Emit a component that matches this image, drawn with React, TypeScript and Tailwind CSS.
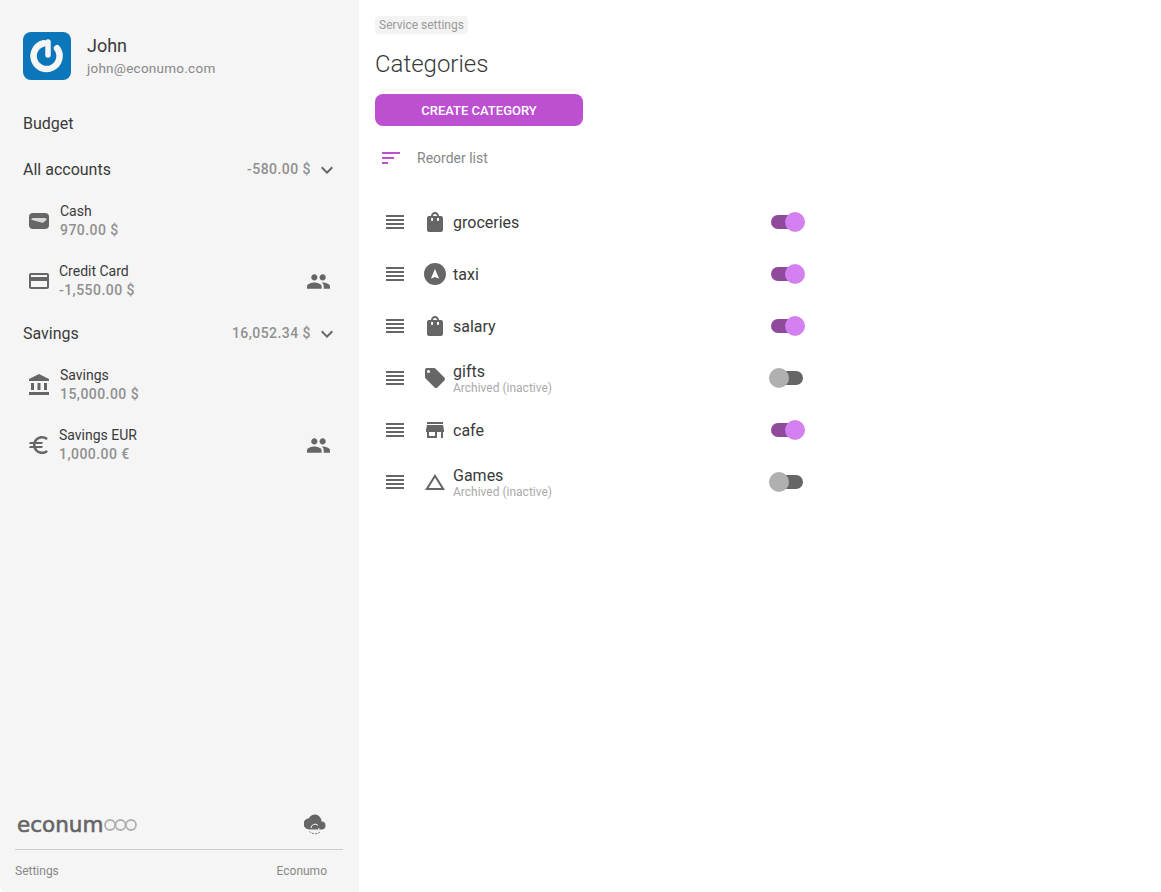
import type { ReactNode } from 'react';
import {
  MdAccountBalance,
  MdChangeHistory,
  MdCreditCard,
  MdEuro,
  MdExpandMore,
  MdLocalOffer,
  MdPeople,
  MdReorder,
  MdShoppingBag,
  MdSort,
  MdStore,
} from 'react-icons/md';

const WalletIcon = ({ size = 24 }: { size?: number }) => (
  <svg width={size} height={size} viewBox="0 0 24 24" fill="none">
    <rect x="2" y="4" width="20" height="16" rx="4" fill="currentColor" />
    <path d="M4.200 10.800C4.600 9.600 5.400 9 6.500 9h11c1.100 0 1.900.6 2.300 1.800l-3.500 2.700c-.3.2-.7.3-1 .2z" fill="#f5f5f5" opacity="0.8" />
  </svg>
);

const NavigationIcon = ({ size = 24 }: { size?: number }) => (
  <svg width={size} height={size} viewBox="0 0 24 24" fill="currentColor">
    <path d="M12 1C5.900 1 1 5.900 1 12s4.900 11 11 11 11-4.900 11-11S18.100 1 12 1zm3.600 15.500L12 15l-3.600 1.500-.35-.35L12 7l3.950 9.150-.35.35z" />
  </svg>
);

const CloudSyncIcon = () => (
  <svg width={22} height={22} viewBox="0 0 22 22" fill="none">
    <path
      fill="#666666"
      d="M17.500 7.500A6.800 6.800 0 0 0 11 .5a6.800 6.800 0 0 0-6 3.700A5.300 5.300 0 0 0 5.500 15.500h12a4 4 0 0 0 0-8z"
    />
    <path d="M7 14a4 4 0 0 1 7-2.500" stroke="#f5f5f5" strokeWidth="1" />
    <path d="M15 14a4 4 0 0 1-1 2.500" stroke="#f5f5f5" strokeWidth="1" />
    <path d="M5.500 17.500a7 6 0 0 0 11 0" stroke="#777777" strokeWidth="1" strokeDasharray="2 1" />
  </svg>
);

const Avatar = () => (
  <div className="flex h-12 w-12 shrink-0 items-center justify-center rounded-lg bg-[#0b76b9]">
    <svg width={48} height={48} viewBox="0 0 48 48" fill="none">
      <g stroke="#f6f6f6" style={{ filter: 'blur(0.7px)' }}>
        <path d="M21 11.300A13 13 0 1 0 34 16.300" strokeWidth="6.500" strokeLinecap="round" />
        <path d="M25 10V23" strokeWidth="5.500" strokeLinecap="round" />
      </g>
    </svg>
  </div>
);

const Logo = () => (
  <div className="flex items-center">
    <span className="font-['DejaVu_Sans'] text-[21.500px] leading-none text-[#666666] [-webkit-text-stroke:0.6px_#666666]">econum</span>
    <svg width={35} height={14} viewBox="0 0 35 14" fill="none" stroke="#b0b0b0" strokeWidth="1.800" className="ml-[1px]">
      <circle cx="6" cy="7" r="5" />
      <circle cx="16.500" cy="7" r="5" />
      <circle cx="27" cy="7" r="5" />
    </svg>
  </div>
);

interface Account {
  name: string;
  balance: string;
  icon: ReactNode;
  shared?: boolean;
  textClass: string;
}

interface AccountGroup {
  name: string;
  total: string;
  accounts: Account[];
}

const groups: AccountGroup[] = [
  {
    name: 'All accounts',
    total: '-580.00 $',
    accounts: [
      { name: 'Cash', balance: '970.00 $', icon: <WalletIcon />, textClass: 'ml-[5px]' },
      { name: 'Credit Card', balance: '-1,550.00 $', icon: <MdCreditCard size={24} />, shared: true, textClass: 'ml-[4px]' },
    ],
  },
  {
    name: 'Savings',
    total: '16,052.34 $',
    accounts: [
      { name: 'Savings', balance: '15,000.00 $', icon: <MdAccountBalance size={24} />, textClass: 'ml-[5px]' },
      { name: 'Savings EUR', balance: '1,000.00 €', icon: <MdEuro size={24} />, shared: true, textClass: 'ml-[4px]' },
    ],
  },
];

interface Category {
  name: string;
  icon: ReactNode;
  archived?: boolean;
}

const categories: Category[] = [
  { name: 'groceries', icon: <MdShoppingBag size={24} /> },
  { name: 'taxi', icon: <NavigationIcon /> },
  { name: 'salary', icon: <MdShoppingBag size={24} /> },
  { name: 'gifts', icon: <MdLocalOffer size={24} />, archived: true },
  { name: 'cafe', icon: <MdStore size={24} /> },
  { name: 'Games', icon: <MdChangeHistory size={24} />, archived: true },
];

const Toggle = ({ on }: { on: boolean }) => (
  <div className="relative h-5 w-9">
    <div className={`absolute top-[3px] right-[2px] left-[2px] h-[14px] rounded-full ${on ? 'bg-[#8f4a9c]' : 'bg-[#666666]'}`} />
    <div className={`absolute top-0 h-5 w-5 rounded-full ${on ? 'right-0 bg-[#d580f0]' : 'left-0 bg-[#b0b0b0]'}`} />
  </div>
);

const Sidebar = () => (
  <aside className="flex h-full w-[359px] shrink-0 flex-col rounded-bl-md bg-[#f5f5f5] text-[#3a3a3a]">
    {/* User */}
    <div className="flex items-center pt-8 pl-[23px]">
      <Avatar />
      <div className="ml-4">
        <div className="-mt-[1px] text-[18px] leading-[24px]">John</div>
        <div className="text-[13.500px] leading-[20px] tracking-[0.25px] text-[#888888]">john@econumo.com</div>
      </div>
    </div>

    <div className="mt-[33px] pl-[23px] text-[16px] leading-[22px]">Budget</div>

    {/* Accounts */}
    <div className="mt-[13px] flex flex-col">
      {groups.map(group => (
        <div key={group.name} className="flex flex-col">
          <div className="flex h-[43px] items-center justify-between pr-[20px] pl-[23px]">
            <span className="text-[16px]">{group.name}</span>
            <div className="flex items-center gap-[4px] text-[#909090]">
              <span className="text-[14px] font-medium tracking-[0.45px]">{group.total}</span>
              <MdExpandMore size={24} className="text-[#666666]" />
            </div>
          </div>
          <div className="flex flex-col pb-[1px]">
            {group.accounts.map(account => (
              <div key={account.name} className="flex h-[60px] items-center pr-[28px] pl-[27px]">
                <div className="flex w-7 shrink-0 justify-start text-[#666666]">{account.icon}</div>
                <div className={`min-w-0 flex-1 pb-[1px] ${account.textClass}`}>
                  <div className="text-[14px] leading-[18px]">{account.name}</div>
                  <div className="mt-[1px] text-[14px] leading-[18px] font-medium tracking-[0.45px] text-[#909090]">{account.balance}</div>
                </div>
                {account.shared && <MdPeople size={25} className="text-[#666666]" />}
              </div>
            ))}
          </div>
        </div>
      ))}
    </div>

    {/* Footer */}
    <div className="mt-auto">
      <div className="mr-[16px] ml-[15px] flex h-[49px] items-center justify-between border-b border-[#cccccc] pr-[17px] pl-[2px]">
        <Logo />
        <CloudSyncIcon />
      </div>
      <div className="flex h-[42px] items-center justify-between pr-[32px] pl-[15px] text-[12px] text-[#888888]">
        <span>Settings</span>
        <span>Econumo</span>
      </div>
    </div>
  </aside>
);

export default function App() {
  return (
    <div className="flex h-screen bg-white font-['Roboto',sans-serif]">
      <Sidebar />
      <main className="flex-1 px-4 pt-4">
        <span className="block w-fit rounded bg-[#f3f3f3] px-1 text-[12px] leading-[18px] text-[#9a9a9a]">Service settings</span>
        <h1 className="mt-[12px] text-[24px] leading-[36px] font-light text-[#3a3a3a]">Categories</h1>
        <button className="mt-[12px] block h-8 w-[208px] rounded-lg bg-[#bd4fd1] pt-[1px] text-[13px] font-medium text-white uppercase">
          Create category
        </button>
        <div className="mt-[16px] flex h-[32px] items-center pl-[4px] text-[14px] text-[#888888]">
          <MdSort size={24} className="text-[#bd4fd1]" />
          <span className="ml-[14px]">Reorder list</span>
        </div>
        <div className="mt-[22px] flex w-[430px] flex-col text-[#3a3a3a]">
          {categories.map(category => (
            <div key={category.name} className="flex h-[52px] items-center">
              <MdReorder size={24} className="ml-2 shrink-0 text-[#666666]" />
              <div className="ml-[16px] flex w-6 shrink-0 justify-center text-[#666666]">{category.icon}</div>
              <div className="ml-[6px] flex-1 pt-[2px]">
                <div className={`text-[16px] ${category.archived ? 'leading-[18px]' : 'leading-[24px]'}`}>{category.name}</div>
                {category.archived && <div className="text-[12px] leading-[14px] text-[#aaaaaa]">Archived (inactive)</div>}
              </div>
              <Toggle on={!category.archived} />
            </div>
          ))}
        </div>
      </main>
    </div>
  );
}
